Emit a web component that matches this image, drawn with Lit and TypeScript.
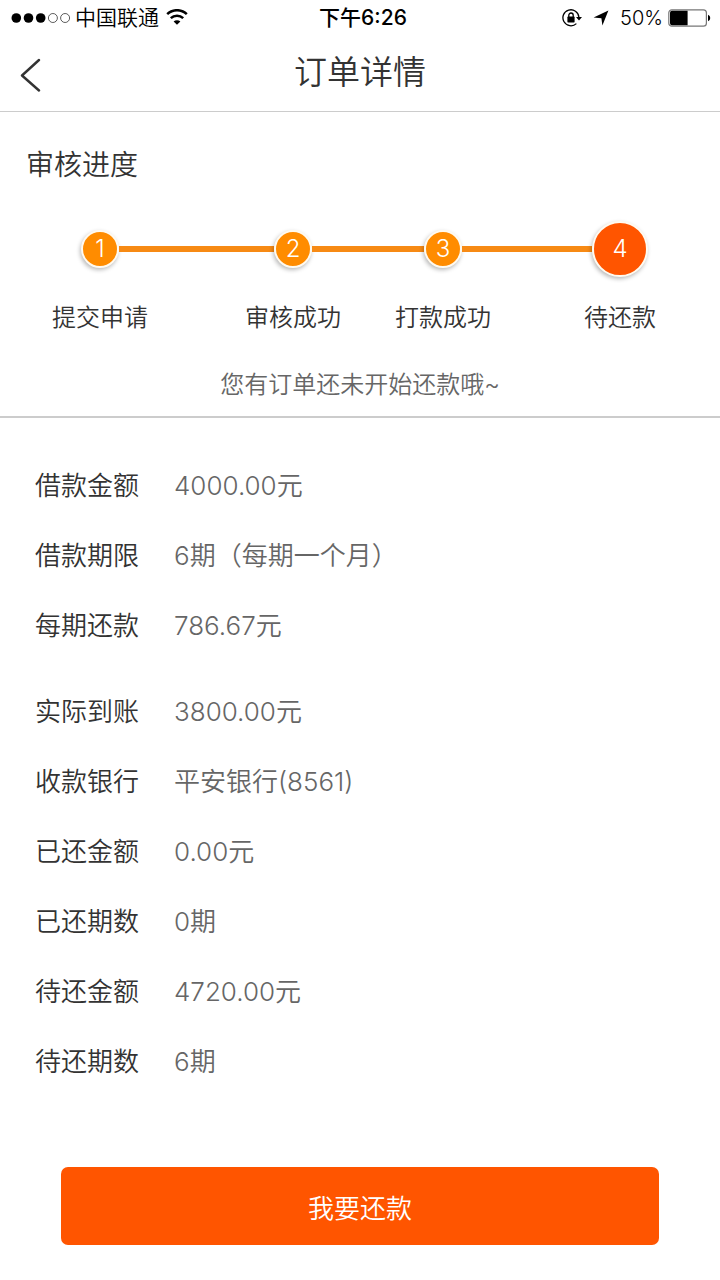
import { LitElement, html, css, svg } from "lit";
import { customElement, property } from "lit/decorators.js";
import { classMap } from "lit/directives/class-map.js";

@customElement("status-bar")
class StatusBar extends LitElement {
  static styles = css`
    :host {
      display: grid;
      grid-template-columns: 1fr auto 1fr;
      align-items: center;
      height: 36px;
      padding: 0 9px 0 11px;
      color: #000;
      font-size: 20px;
      line-height: 36px;
    }
    .side {
      display: flex;
      align-items: center;
    }
    .end {
      justify-content: flex-end;
    }
    .carrier {
      font-size: 21px;
      margin: 0 7px 0 4px;
    }
    .time {
      font-size: 21px;
      font-weight: 500;
      padding-left: 4px;
    }
    .percent {
      margin: 0 5px 0 11px;
    }
    .arrow {
      margin-left: 11px;
    }
    svg {
      display: block;
      flex: none;
    }
  `;

  render() {
    return html`
      <div class="side">
        <svg width="60" height="12" viewBox="0 0 60 12" aria-hidden="true">
          ${[0, 1, 2, 3, 4].map((i) =>
            i < 3
              ? svg`<circle cx=${5.3 + i * 12.2} cy="6" r="4.8" />`
              : svg`<circle cx=${5.3 + i * 12.2} cy="6" r="4.5" fill="none" stroke="#333" stroke-width="0.8" />`
          )}
        </svg>
        <span class="carrier">中国联通</span>
        <svg width="22" height="18" viewBox="0 0 22 18" fill="none" stroke="#000" stroke-width="2.5" aria-hidden="true">
          <path d="M1.2 5.2A14 14 0 0 1 20.8 5.2" />
          <path d="M4.8 9.2A9 9 0 0 1 17.2 9.2" />
          <path d="M11 15.8L7.6 12.6A4.9 4.9 0 0 1 14.4 12.6Z" fill="#000" stroke="none" />
        </svg>
      </div>
      <span class="time">下午6:26</span>
      <div class="side end">
        <svg width="20" height="18" viewBox="0 0 20 18" aria-hidden="true">
          <path d="M14.4 14.6A8 8 0 1 1 16.9 8.2" fill="none" stroke="#000" stroke-width="1.3" />
          <path d="M14 8H20L17 11.6Z" />
          <rect x="5.4" y="7.6" width="7.2" height="5.8" rx="0.6" />
          <path d="M6.8 8V6.2A2.2 2.2 0 0 1 11.2 6.2V8" fill="none" stroke="#000" stroke-width="1.3" />
        </svg>
        <svg class="arrow" width="16" height="16" viewBox="0 0 16 16" aria-hidden="true">
          <path d="M15.4 0.6L9.4 15.6L8.4 8.2L0.6 7.6Z" />
        </svg>
        <span class="percent">50%</span>
        <svg width="43" height="18" viewBox="0 0 43 18" aria-hidden="true">
          <rect x="0.8" y="0.8" width="37.6" height="16.4" rx="3" fill="none" stroke="#777" stroke-width="1.2" />
          <path d="M4 1.8H19.6V16.2H4A2 2 0 0 1 2 14.2V3.8A2 2 0 0 1 4 1.8Z" />
          <path d="M40 5.8A3.4 3.4 0 0 1 40 12.2Z" />
        </svg>
      </div>
    `;
  }
}

interface Step {
  label: string;
  span: number;
}

@customElement("progress-steps")
class ProgressSteps extends LitElement {
  @property({ attribute: false }) steps: Step[] = [];
  @property({ type: Number }) current = 1;

  static styles = css`
    :host {
      display: block;
    }
    .steps {
      display: flex;
      margin: 0;
      padding: 0 72px 0 81px;
      list-style: none;
    }
    .step {
      display: grid;
      grid-template-columns: auto 1fr;
      grid-template-rows: 58px auto;
      align-items: center;
      row-gap: 22px;
      flex: 0 0 auto;
      min-width: 0;
    }
    .head {
      display: grid;
      justify-items: center;
      width: 38px;
    }
    .current .head {
      width: 56px;
    }
    .node {
      box-sizing: border-box;
      display: grid;
      place-items: center;
      width: 38px;
      height: 38px;
      border: 2px solid #fffaf0;
      border-radius: 50%;
      background: #ff8c00;
      box-shadow: -1px 2px 4px rgba(0, 0, 0, 0.28);
      color: #fff;
      font-size: 24px;
      line-height: 34px;
    }
    .current .node {
      width: 56px;
      height: 56px;
      background: #ff5500;
    }
    .line {
      height: 6px;
      background: #f78a14;
    }
    .label {
      grid-column: 1;
      grid-row: 2;
      width: 0;
      justify-self: center;
      display: flex;
      justify-content: center;
      white-space: nowrap;
      font-size: 24px;
      line-height: 36px;
    }
  `;

  render() {
    return html`
      <ol class="steps">
        ${this.steps.map((s, i) => {
          const current = i + 1 === this.current;
          return html`
            <li
              class=${classMap({ step: true, current })}
              style=${s.span ? `flex:${s.span} 1 38px` : ""}
              aria-current=${current ? "step" : "false"}
            >
              <div class="head"><span class="node">${i + 1}</span></div>
              ${s.span ? html`<div class="line"></div>` : ""}
              <span class="label">${s.label}</span>
            </li>
          `;
        })}
      </ol>
    `;
  }
}

@customElement("detail-list")
class DetailList extends LitElement {
  @property({ attribute: false }) rows: [string, string][] = [];

  static styles = css`
    :host {
      display: block;
    }
    .list {
      margin: 0;
      padding: 0 35px;
    }
    .row {
      display: flex;
      gap: 35px;
      font-size: 26px;
      line-height: 70px;
    }
    .name {
      flex: none;
      color: #333;
    }
    .value {
      margin: 0;
      color: #666;
    }
  `;

  render() {
    return html`
      <dl class="list">
        ${this.rows.map(
          ([name, value]) => html`
            <div class="row">
              <dt class="name">${name}</dt>
              <dd class="value">${value}</dd>
            </div>
          `
        )}
      </dl>
    `;
  }
}

@customElement("app-root")
class AppRoot extends LitElement {
  static styles = css`
    :host {
      display: block;
      min-height: 100vh;
      background: #fff;
      color: #333;
      font-family: Inter, "Noto Sans CJK SC", sans-serif;
      font-weight: 350;
    }
    .nav {
      display: grid;
      grid-template-columns: 60px 1fr 60px;
      align-items: center;
      height: 75px;
      border-bottom: 1px solid #ccc;
    }
    .back {
      display: flex;
      align-items: center;
      height: 60px;
      margin: 0;
      padding: 2px 0 0 20px;
      border: 0;
      background: none;
    }
    .title {
      margin: 0;
      padding-bottom: 4px;
      text-align: center;
      font-size: 33px;
      font-weight: inherit;
      line-height: 70px;
    }
    .progress {
      padding-top: 33px;
      border-bottom: 2px solid #ccc;
    }
    .heading {
      margin: 0 0 35px;
      padding: 0 26px;
      font-size: 28px;
      font-weight: inherit;
      line-height: 40px;
    }
    .note {
      margin: 0;
      padding: 31px 0 13px;
      text-align: center;
      color: #666;
      font-size: 24px;
      line-height: 36px;
    }
    .details {
      display: grid;
      gap: 16px;
      padding-top: 33px;
    }
    .action {
      padding: 70px 61px 35px;
    }
    .pay {
      display: block;
      width: 100%;
      height: 78px;
      padding: 0;
      border: 0;
      border-radius: 7px;
      background: #ff5500;
      color: #fff;
      font: inherit;
      font-size: 26px;
    }
  `;

  private steps: Step[] = [
    { label: "提交申请", span: 155 },
    { label: "审核成功", span: 112 },
    { label: "打款成功", span: 130 },
    { label: "待还款", span: 0 },
  ];

  private loan: [string, string][] = [
    ["借款金额", "4000.00元"],
    ["借款期限", "6期（每期一个月）"],
    ["每期还款", "786.67元"],
  ];

  private repayment: [string, string][] = [
    ["实际到账", "3800.00元"],
    ["收款银行", "平安银行(8561)"],
    ["已还金额", "0.00元"],
    ["已还期数", "0期"],
    ["待还金额", "4720.00元"],
    ["待还期数", "6期"],
  ];

  render() {
    return html`
      <status-bar></status-bar>
      <header class="nav">
        <button class="back" type="button" aria-label="返回">
          <svg width="22" height="34" viewBox="0 0 22 34" fill="none" stroke="#333" stroke-width="2.4" stroke-linecap="round" stroke-linejoin="round" aria-hidden="true">
            <path d="M19 2L2 17.5L19 32.5" />
          </svg>
        </button>
        <h1 class="title">订单详情</h1>
      </header>
      <main>
        <section class="progress">
          <h2 class="heading">审核进度</h2>
          <progress-steps .steps=${this.steps} current="4"></progress-steps>
          <p class="note">您有订单还未开始还款哦~</p>
        </section>
        <section class="details">
          <detail-list .rows=${this.loan}></detail-list>
          <detail-list .rows=${this.repayment}></detail-list>
        </section>
        <div class="action">
          <button class="pay" type="button">我要还款</button>
        </div>
      </main>
    `;
  }
}
